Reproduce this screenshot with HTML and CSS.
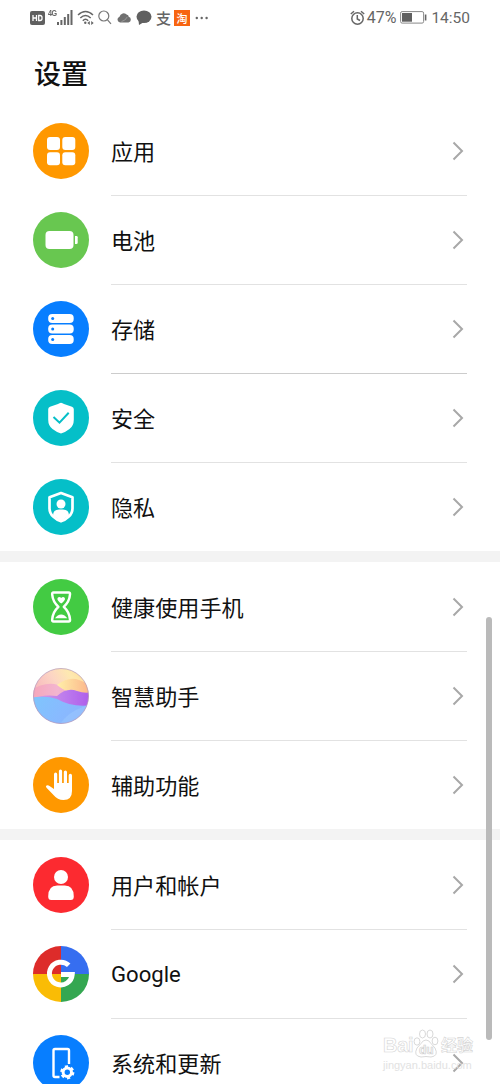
FILE: index.html
```html
<!DOCTYPE html>
<html lang="zh-CN">
<head>
<meta charset="utf-8">
<title>设置</title>
<link rel="stylesheet" href="styles.css">
</head>
<body>
<div class="screen">
  <header class="status">
    <svg class="hd" width="15" height="14" viewBox="0 0 15 14"><rect width="15" height="14" rx="2" fill="#606060"/><path d="M3 4v6M6.500 4v6M3 7h3.500M8.700 4.500v5h1.300a2 2 0 0 0 2-2v-1a2 2 0 0 0-2-2z" fill="none" stroke="#fff" stroke-width="1.300"/></svg>
    <span class="net">4G</span>
    <svg class="signal" width="16" height="15" viewBox="0 0 16 15" fill="#666"><path d="M0 12h2v3H0zM3.400 10h2v5h-2zM6.800 7h2v8h-2zM10.200 4h2v11h-2zM13.500 0h2v15h-2z"/></svg>
    <svg class="wifi" width="18" height="15" viewBox="0 0 18 15" fill="none" stroke="#666" stroke-width="1.500"><path d="M1 5Q8.500-2 16 5M3.300 8Q8.500 3 13.700 8M5.800 10.700Q8.500 8 11.200 10.700"/><circle cx="8.300" cy="12.800" r="1.200" fill="#666" stroke="none"/><path d="M10.300 13l2.500-2v4zM16.700 13l-2.500-2v4z" fill="#666" stroke="none"/></svg>
    <svg class="search" width="14" height="15" viewBox="0 0 14 15" fill="none" stroke="#777" stroke-width="1.200"><circle cx="5.800" cy="6" r="5"/><path d="M9.500 9.800l3.500 4"/></svg>
    <svg class="cloud" width="15" height="11" viewBox="0 0 15 11"><path d="M3 10.500A3 3 0 0 1 2.500 4.700 4.300 4.300 0 0 1 10 2.800Q11.500 3 11.700 4.700A3 3 0 0 1 11.500 10.500z" fill="#707070"/><path d="M4.500 9.500Q8 9 10.300 5" stroke="#999" fill="none"/></svg>
    <svg class="chat" width="16" height="15" viewBox="0 0 16 15"><ellipse cx="8" cy="6.800" rx="7.500" ry="6.300" fill="#606060"/><path d="M2.500 10L3 15l5-3z" fill="#606060"/></svg>
    <span class="zhi">支</span>
    <span class="tao">淘</span>
    <svg class="dots" width="14" height="4" viewBox="0 0 14 4" fill="#666"><circle cx="1.800" cy="2" r="1.200"/><circle cx="6.700" cy="2" r="1.200"/><circle cx="11.600" cy="2" r="1.200"/></svg>
    <div class="status-right">
      <svg width="15" height="16" viewBox="0 0 15 16" fill="none" stroke="#666" stroke-width="1.500"><circle cx="7.500" cy="8.500" r="5.700"/><path d="M7.300 5v4l2.700 1.500M.8 4L4 1.300M14.200 4L11 1.300"/></svg>
      <span class="pct">47%</span>
      <svg class="batt" width="27" height="13" viewBox="0 0 27 13"><rect x=".6" y=".6" width="23" height="11.500" rx="1.500" fill="none" stroke="#888"/><rect x="2" y="2" width="10" height="8.700" fill="#606060"/><path d="M24.800 3.500h1.600v6h-1.600z" fill="#666"/></svg>
      <span class="time">14:50</span>
    </div>
  </header>
  <h1 class="title">设置</h1>
  <main>
    <section class="group">
      <div class="row">
        <svg class="icon" viewBox="0 0 56 56"><circle cx="28" cy="28" r="28" fill="#ff9800"/><g fill="#fff"><rect x="14" y="14" width="13" height="13" rx="3"/><rect x="29.300" y="14" width="13" height="13" rx="3"/><rect x="14" y="29.200" width="13" height="13" rx="3"/><rect x="29.300" y="29.200" width="13" height="13" rx="3"/></g></svg>
        <div class="cell"><span>应用</span><svg class="chev" viewBox="0 0 12 20"><path d="M1.500 1.500L10 10l-8.500 8.500"/></svg></div>
      </div>
      <div class="row">
        <svg class="icon" viewBox="0 0 56 56"><circle cx="28" cy="28" r="28" fill="#68c750"/><rect x="12.500" y="19" width="28" height="18" rx="4" fill="#fff"/><path d="M42 24h1.500q1.200 0 1.200 1.200v5.600q0 1.200-1.200 1.200H42z" fill="#fff"/></svg>
        <div class="cell"><span>电池</span><svg class="chev" viewBox="0 0 12 20"><path d="M1.500 1.500L10 10l-8.500 8.500"/></svg></div>
      </div>
      <div class="row">
        <svg class="icon" viewBox="0 0 56 56"><circle cx="28" cy="28" r="28" fill="#077eff"/><g fill="#fff"><rect x="15.200" y="13" width="25.500" height="9" rx="4"/><rect x="15.200" y="23.500" width="25.500" height="9" rx="4"/><rect x="15.200" y="34" width="25.500" height="9" rx="4"/></g><g fill="#077eff"><circle cx="19.700" cy="17.500" r="1.500"/><circle cx="19.700" cy="28" r="1.500"/><circle cx="19.700" cy="38.500" r="1.500"/></g></svg>
        <div class="cell dark"><span>存储</span><svg class="chev" viewBox="0 0 12 20"><path d="M1.500 1.500L10 10l-8.500 8.500"/></svg></div>
      </div>
      <div class="row">
        <svg class="icon" viewBox="0 0 56 56"><circle cx="28" cy="28" r="28" fill="#05bfc8"/><path d="M28 12.800Q29.500 13 31 14l8 2.800q1.800.6 1.800 2.400v10.500q0 6-4.300 9.300-4.500 3.500-8.500 4.500-4-1-8.500-4.500-4.300-3.300-4.300-9.300V19.200q0-1.800 1.800-2.400l8-2.800q1.500-1 3-1.200z" fill="#fff"/><path d="M20.500 27l6 5.700 9.200-10" fill="none" stroke="#05bfc8" stroke-width="2"/></svg>
        <div class="cell"><span>安全</span><svg class="chev" viewBox="0 0 12 20"><path d="M1.500 1.500L10 10l-8.500 8.500"/></svg></div>
      </div>
      <div class="row">
        <svg class="icon" viewBox="0 0 56 56"><circle cx="28" cy="28" r="28" fill="#05bfc8"/><path d="M28 14l11.500 4.300v11q0 5-3.700 8.300Q32 41.200 28 42.300q-4-1.100-7.800-4.700-3.700-3.300-3.700-8.300v-11z" fill="none" stroke="#fff" stroke-width="2.700" stroke-linejoin="round"/><circle cx="28" cy="25" r="4.500" fill="#fff"/><path d="M20 36.500q0-6 6-6h4q6 0 6 6l-8 5.500z" fill="#fff"/></svg>
        <div class="cell"><span>隐私</span><svg class="chev" viewBox="0 0 12 20"><path d="M1.500 1.500L10 10l-8.500 8.500"/></svg></div>
      </div>
    </section>
    <section class="group">
      <div class="row">
        <svg class="icon" viewBox="0 0 56 56"><circle cx="28" cy="28" r="28" fill="#43cb43"/><path d="M20.500 13.500h15.200q1.500 0 1.300 2-.5 7-6.200 12.300 5.700 5.200 6.200 12.700.2 2-1.300 2H20.500q-1.500 0-1.300-2 .5-7.500 6.200-12.700-5.700-5.300-6.200-12.300-.2-2 1.300-2z" fill="none" stroke="#fff" stroke-width="2.500" stroke-linejoin="round"/><path d="M28.200 24.500q-4-3-3.800-4.800.2-1.700 1.800-1.700 1.300 0 2 1 .7-1 2-1 1.600 0 1.800 1.700.2 1.800-3.800 4.800zM22 39.300q2.500-3.800 6.200-3.800 3.600 0 6.100 3.800z" fill="#fff"/></svg>
        <div class="cell"><span>健康使用手机</span><svg class="chev" viewBox="0 0 12 20"><path d="M1.500 1.500L10 10l-8.500 8.500"/></svg></div>
      </div>
      <div class="row">
        <svg class="icon" viewBox="0 0 56 56">
          <defs>
            <clipPath id="ball"><circle cx="28" cy="28" r="27.700"/></clipPath>
            <filter id="soft" x="-10%" y="-10%" width="120%" height="120%"><feGaussianBlur stdDeviation=".7"/></filter>
            <linearGradient id="sky" x1="0" x2="1" y1=".6" y2="0"><stop offset="0" stop-color="#f5aebb"/><stop offset=".45" stop-color="#fcd5c4"/><stop offset=".7" stop-color="#fee9b0"/><stop offset="1" stop-color="#ffd890"/></linearGradient>
            <linearGradient id="peach" x1="0" x2="1"><stop offset="0" stop-color="#fff0a8"/><stop offset="1" stop-color="#fcb088"/></linearGradient>
            <linearGradient id="pink" x1="0" x2="1"><stop offset="0" stop-color="#f5a5b8"/><stop offset=".45" stop-color="#f3b5d0"/><stop offset="1" stop-color="#ee92b8"/></linearGradient>
            <linearGradient id="violet" x1="0" x2="1"><stop offset="0" stop-color="#d8a5e4"/><stop offset=".6" stop-color="#bb78ed"/><stop offset="1" stop-color="#ad5bea"/></linearGradient>
            <linearGradient id="blue" x1="0" x2="1" y1="0" y2=".3"><stop offset="0" stop-color="#7ec6fc"/><stop offset=".6" stop-color="#88baff"/><stop offset="1" stop-color="#8cb4fb"/></linearGradient>
          </defs>
          <g clip-path="url(#ball)"><rect width="56" height="56" fill="url(#sky)"/><g filter="url(#soft)"><path d="M-3 23Q12 13 25 17 30 22 38 23 48 26 59 22v18H-3z" fill="url(#pink)"/><path d="M24 17Q36 8 46 12 54 14 59 22v4Q38 29 24 17z" fill="url(#peach)"/><path d="M-3 31Q10 26 24 28 34 19 44 23 52 26 59 24v18H-3z" fill="url(#violet)"/><path d="M-3 30Q12 27 24 31 40 40 59 37v22H-3z" fill="url(#blue)"/><path d="M26 58Q35 42 59 36v22z" fill="#a3d2ff" opacity=".35"/></g></g><circle cx="28" cy="28" r="27.500" fill="none" stroke="#b39abd" stroke-width=".7"/></svg>
        <div class="cell"><span>智慧助手</span><svg class="chev" viewBox="0 0 12 20"><path d="M1.500 1.500L10 10l-8.500 8.500"/></svg></div>
      </div>
      <div class="row">
        <svg class="icon" viewBox="0 0 56 56"><circle cx="28" cy="28" r="28" fill="#ff9800"/><path d="M21 30V17.200a1.600 1.600 0 0 1 3.200 0V26h1.700V14.200a1.600 1.600 0 0 1 3.200 0V26h1.700V15a1.600 1.600 0 0 1 3.200 0v11h1.700v-7.500a1.600 1.600 0 0 1 3.300 0V34q0 9-8.500 9-6 0-10-5l-7-7.200q-1.200-1.400 0-2.200 1.300-.8 3 .4l4.500 3z" fill="#fff"/></svg>
        <div class="cell"><span>辅助功能</span><svg class="chev" viewBox="0 0 12 20"><path d="M1.500 1.500L10 10l-8.500 8.500"/></svg></div>
      </div>
    </section>
    <section class="group">
      <div class="row">
        <svg class="icon" viewBox="0 0 56 56"><circle cx="28" cy="28" r="28" fill="#fc2a30"/><circle cx="28" cy="20" r="7" fill="#fff"/><path d="M15.200 39.500q0-11 9-11h7.600q9 0 9 11 0 3.500-3 3.500H18.200q-3 0-3-3.500z" fill="#fff"/></svg>
        <div class="cell"><span>用户和帐户</span><svg class="chev" viewBox="0 0 12 20"><path d="M1.500 1.500L10 10l-8.500 8.500"/></svg></div>
      </div>
      <div class="row">
        <svg class="icon" viewBox="0 0 56 56"><path d="M28 28V0A28 28 0 0 0 0 28z" fill="#dd2c2a"/><path d="M28 28h28A28 28 0 0 0 28 0z" fill="#366ef0"/><path d="M28 28H0a28 28 0 0 0 28 28z" fill="#fabc05"/><path d="M28 28v28a28 28 0 0 0 28-28z" fill="#34a751"/><path d="M35.700 19.300A11.400 11.400 0 1 0 39.200 28.500H28" fill="none" stroke="#fff" stroke-width="5"/></svg>
        <div class="cell latin"><span>Google</span><svg class="chev" viewBox="0 0 12 20"><path d="M1.500 1.500L10 10l-8.500 8.500"/></svg></div>
      </div>
      <div class="row">
        <svg class="icon" viewBox="0 0 56 56"><circle cx="28" cy="28" r="28" fill="#077eff"/><path d="M26.500 42H22q-1.500 0-1.500-1.500v-25q0-1.500 1.500-1.500h12.500q1.500 0 1.500 1.500V29" fill="none" stroke="#fff" stroke-width="2.400"/><circle cx="34.300" cy="37.300" r="4.200" fill="none" stroke="#fff" stroke-width="3"/><circle cx="34.300" cy="37.300" r="6" fill="none" stroke="#fff" stroke-width="2.200" stroke-dasharray="3.140 3.140"/></svg>
        <div class="cell"><span>系统和更新</span><svg class="chev" viewBox="0 0 12 20"><path d="M1.500 1.500L10 10l-8.500 8.500"/></svg></div>
      </div>
    </section>
  </main>
  <div class="scrollbar"></div>
  <div class="mark">
    <div class="mark-top"><span class="bai">Bai</span><svg width="26" height="29" viewBox="0 0 26 29"><g fill="none" stroke="#d5d5d5" stroke-width=".9"><ellipse cx="4" cy="12.500" rx="2.900" ry="3.700"/><ellipse cx="9.500" cy="5" rx="3" ry="4"/><ellipse cx="17" cy="5" rx="3" ry="4"/><ellipse cx="22" cy="12" rx="2.900" ry="3.800"/><path d="M13 11q3 0 5 3.500l4 4.500q4 8-4 9-5-1-10 0-8-1-4-9l4-4.500q2-3.500 5-3.500z"/></g><text x="6" y="25" class="du">du</text></svg><span class="exp">经验</span></div>
    <div class="mark-url">jingyan.baidu.com</div>
  </div>
</div>
</body>
</html>
```
FILE: styles.css
```css
body { margin: 0; }
.screen {
  position: relative;
  width: 500px;
  height: 1084px;
  overflow: hidden;
  background: #fff;
  color: #111;
  font-family: Roboto, "Noto Sans CJK SC", sans-serif;
}
.status {
  display: flex;
  align-items: center;
  height: 35px;
  padding: 0 30px 0 30px;
  color: #666;
}
.status svg { flex: none; }
.net { align-self: flex-start; width: 9px; margin: 9px 0 0 3px; font: bold 9px/9px "Liberation Sans", sans-serif; letter-spacing: -.5px; transform: scaleX(.8); transform-origin: left; }
.wifi { margin-left: 4px; }
.search { margin-left: 3px; }
.cloud { margin-left: 5px; }
.chat { margin-left: 4px; }
.zhi { width: 16px; margin-left: 4px; font: 500 15px/16px "Noto Sans CJK SC", sans-serif; }
.tao { width: 16px; height: 16px; margin-left: 2px; background: #f76512; color: #fff; font: 500 11px/16px "Noto Sans CJK SC", sans-serif; text-align: center; }
.dots { margin-left: 5px; }
.status-right { display: flex; align-items: center; margin-left: auto; font-size: 16px; line-height: 18px; }
.pct { margin-left: 2px; }
.batt { margin: 0 4px 0 4px; }
.time { font-size: 15.500px; }
.title { height: 72px; margin: 0; padding-left: 34px; color: #111; font-size: 27px; font-weight: 500; line-height: 80px; }
.group + .group { border-top: 11px solid #f3f3f3; padding-top: 1px; }
.row { display: flex; align-items: flex-start; height: 89px; padding: 0 33px; }
.row:last-child { height: 88px; }
.icon { flex: none; width: 56px; height: 56px; margin: 16px 22px 0 0; }
.cell {
  flex: 1;
  display: flex;
  align-items: center;
  justify-content: space-between;
  height: 88px;
  border-bottom: 1px solid #e2e2e2;
  font-size: 22.100px;
}
.cell span { padding-bottom: 2px; }
.cell.latin span { padding-bottom: 0; }
.cell.dark { border-color: #ccc; }
.row:last-child .cell { border-bottom: 0; }
.chev { width: 12px; height: 20px; margin-right: 3px; fill: none; stroke: #a8a8a8; stroke-width: 2; }
.scrollbar { position: absolute; left: 486px; top: 617px; width: 6px; height: 423px; border-radius: 3px; background: #bababa; }
.mark { position: absolute; left: 383px; top: 1029px; width: 92px; color: transparent; font-family: "Liberation Sans", "Noto Sans CJK SC", sans-serif; -webkit-text-stroke: .6px #d5d5d5; }
.mark-top { display: flex; align-items: flex-end; height: 29px; font-weight: bold; line-height: 25px; }
.mark-top svg { flex: none; margin-left: -2px; }
.bai { width: 32px; font-size: 20px; letter-spacing: -.3px; }
.du { fill: #fff; stroke: #d0d0d0; stroke-width: .7px; font-size: 12px; }
.exp { margin-left: 2px; font-size: 16px; white-space: nowrap; }
.mark-url { color: #e2e2e2; font-size: 11px; line-height: 14px; -webkit-text-stroke: 0; }
```
